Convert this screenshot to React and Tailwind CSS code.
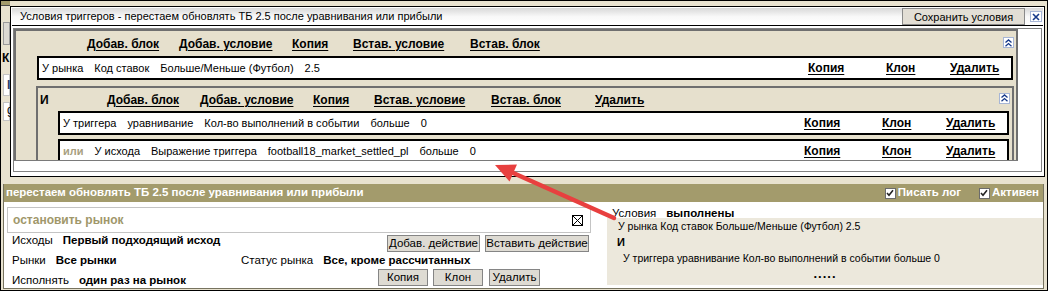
import React from 'react';

const L = ({ children }) => (
  <span className="font-bold underline decoration-1 underline-offset-2">{children}</span>
);

function Collapse() {
  return (
    <span className="flex h-[11px] w-[11px] items-center justify-center border border-[#a7b6d6] bg-white">
      <svg width="7" height="8" viewBox="0 0 7 8">
        <path d="M0.5 3.6 3.5 0.9 6.5 3.6M0.5 7.3 3.5 4.6 6.5 7.3" fill="none" stroke="#173a8a" strokeWidth="1.3" />
      </svg>
    </span>
  );
}

function CondRow({ className, children }) {
  return (
    <div className={`flex h-[24px] items-center border-2 border-black bg-white pl-[3px] ${className}`}>
      <div className="flex flex-1 items-center gap-[11px] text-[11px]">{children}</div>
      <div className="flex items-center text-[12px]">
        <span className="w-[78px]"><L>Копия</L></span>
        <span className="w-[64px]"><L>Клон</L></span>
        <span className="w-[61px]"><L>Удалить</L></span>
      </div>
    </div>
  );
}

function Btn({ className, children }) {
  return (
    <button className={`h-[17px] whitespace-nowrap border border-[#858585] bg-[#dedbd3] px-0 text-center text-[11.5px] leading-[15px] ${className}`}>
      {children}
    </button>
  );
}

function Check() {
  return (
    <span className="flex h-[11px] w-[11px] items-center justify-center border border-[#6b6b6b] bg-white">
      <svg width="8" height="8" viewBox="0 0 8 8">
        <path d="M1 4 3 6.2 7 1.2" fill="none" stroke="#222" strokeWidth="1.6" />
      </svg>
    </span>
  );
}

function LeftStrip() {
  return (
    <div className="flex w-[9px] flex-col overflow-hidden">
      <div className="h-[5px] border-b border-[#4a4a4a] bg-[#a39b6c]" />
      <div className="ml-[2px] mt-[16px] h-[23px] border border-[#9a9a9a] bg-[#dcd9d2]" />
      <div className="mt-[5px] pl-[1px] text-[12px] font-bold leading-[16px]">К</div>
      <div className="ml-[2px] mt-[8px] h-[22px] border border-[#c4c4c4] bg-white pl-[3px] text-[12px] font-bold leading-[20px] text-[#2b3c6b]">I</div>
      <div className="ml-[2px] mt-[6px] h-[19px] border border-[#c4c4c4] bg-white pl-[3px] text-[12px] leading-[14px]">g</div>
    </div>
  );
}

function Dialog() {
  return (
    <div className="mt-[5px] flex h-[171px] w-[1035px] flex-col border border-black bg-white p-[1px]">
      <div className="flex h-[18px] items-center border-b border-black bg-linear-to-b from-[#d8d8d8] via-[#f8f8f8] to-white pl-[8px] text-[11px]">
        <span>Условия триггеров - перестаем обновлять ТБ 2.5 после уравнивания или прибыли</span>
        <button className="ml-auto h-[17px] w-[123px] border border-[#8a8a8a] bg-[#e2ded5] text-[11px]">Сохранить условия</button>
        <span className="ml-[5px] mr-[1px] flex h-[11px] w-[12px] items-center justify-center border border-[#a7b6d6] bg-white">
          <svg width="8" height="8" viewBox="0 0 8 8">
            <path d="M1 1 7 7M7 1 1 7" stroke="#173a8a" strokeWidth="1.6" />
          </svg>
        </span>
      </div>
      <div className="px-[1px] pt-[2px]">
        <div className="flex h-[144px] border border-[#828282]">
          <div className="h-[132px] w-[1004px] overflow-hidden border-b border-[#7a7a7a]">
            <div className="h-[160px] border-2 border-b-0 border-[#6f6f6f] bg-[#e6e0cd]">
              <div className="flex h-[25px] items-center pl-[71px] pr-[2px] text-[12px]">
                <span className="w-[92px]"><L>Добав. блок</L></span>
                <span className="w-[113px]"><L>Добав. условие</L></span>
                <span className="w-[61px]"><L>Копия</L></span>
                <span className="w-[117px]"><L>Встав. условие</L></span>
                <L>Встав. блок</L>
                <span className="mb-[2px] ml-auto"><Collapse /></span>
              </div>
              <CondRow className="ml-[21px] mr-[3px]">
                <span>У рынка</span>
                <span>Код ставок</span>
                <span>Больше/Меньше (Футбол)</span>
                <span>2.5</span>
              </CondRow>
              <div className="ml-[20px] mr-[2px] mt-[6px] h-[100px] border-2 border-b-0 border-[#6f6f6f]">
                <div className="flex h-[23px] items-center pl-[2px] pr-[2px] text-[12px]">
                  <span className="w-[67px] font-bold">И</span>
                  <span className="w-[93px]"><L>Добав. блок</L></span>
                  <span className="w-[113px]"><L>Добав. условие</L></span>
                  <span className="w-[61px]"><L>Копия</L></span>
                  <span className="w-[117px]"><L>Встав. условие</L></span>
                  <span className="w-[104px]"><L>Встав. блок</L></span>
                  <L>Удалить</L>
                  <span className="mb-[3px] ml-auto"><Collapse /></span>
                </div>
                <CondRow className="ml-[20px] mr-[3px]">
                  <span>У триггера</span>
                  <span>уравнивание</span>
                  <span>Кол-во выполнений в событии</span>
                  <span>больше</span>
                  <span>0</span>
                </CondRow>
                <CondRow className="ml-[20px] mr-[3px] mt-[4px]">
                  <span className="font-bold text-[#a89f80]">или</span>
                  <span>У исхода</span>
                  <span>Выражение триггера</span>
                  <span>football18_market_settled_pl</span>
                  <span>больше</span>
                  <span>0</span>
                </CondRow>
              </div>
            </div>
          </div>
          <div className="flex-1 bg-white" />
        </div>
      </div>
    </div>
  );
}

function Page() {
  return (
    <div className="ml-[2px] mt-[7px] flex h-[105px] w-[1041px] flex-col border-x border-b border-[#77735f]">
      <div className="flex h-[18px] shrink-0 items-center bg-[#a39b6c] pl-[2px] pr-[4px] text-[11.5px] font-bold text-white">
        <span>перестаем обновлять ТБ 2.5 после уравнивания или прибыли</span>
        <span className="ml-auto flex items-center gap-[2px]"><Check />Писать лог</span>
        <span className="ml-[18px] flex items-center gap-[2px]"><Check />Активен</span>
      </div>
      <div className="flex flex-1 overflow-hidden bg-white text-[11.5px]">
        <div className="flex w-[600px] flex-col">
          <div className="ml-[3px] mt-[5px] flex h-[26px] w-[584px] shrink-0 items-center border border-[#c4c4c4] pl-[5px] pr-[7px]">
            <span className="text-[12px] font-bold text-[#a0976a]">остановить рынок</span>
            <span className="ml-auto flex h-[11px] w-[11px] items-center justify-center border border-black">
              <svg width="9" height="9" viewBox="0 0 9 9">
                <path d="M0 0 9 9M9 0 0 9" stroke="#000" strokeWidth="1" />
              </svg>
            </span>
          </div>
          <div className="flex h-[20px] shrink-0 items-start pl-[8px] leading-[14px]">
            <div className="flex w-[375px] gap-[10px]">
              <span>Исходы</span>
              <b>Первый подходящий исход</b>
            </div>
            <div className="mt-[2px] flex gap-[5px]">
              <Btn className="w-[93px]">Добав. действие</Btn>
              <Btn className="w-[104px]">Вставить действие</Btn>
            </div>
          </div>
          <div className="flex h-[20px] shrink-0 items-start pl-[8px] leading-[14px]">
            <div className="flex w-[229px] gap-[10px]">
              <span>Рынки</span>
              <b>Все рынки</b>
            </div>
            <div className="flex gap-[10px]">
              <span>Статус рынка</span>
              <b>Все, кроме рассчитанных</b>
            </div>
          </div>
          <div className="flex h-[20px] shrink-0 items-start pl-[8px] leading-[14px]">
            <div className="flex w-[366px] gap-[10px]">
              <span>Исполнять</span>
              <b>один раз на рынок</b>
            </div>
            <div className="-mt-[4px] flex">
              <Btn className="w-[50px]">Копия</Btn>
              <Btn className="ml-[5px] w-[50px]">Клон</Btn>
              <Btn className="ml-[6px] w-[51px]">Удалить</Btn>
            </div>
          </div>
        </div>
        <div className="flex flex-1 flex-col pt-[4px]">
          <div className="flex h-[12px] gap-[10px] pl-[8px] leading-[14px]">
            <span>Условия</span>
            <b>выполнены</b>
          </div>
          <div className="ml-[3px] h-[67px] bg-[#ece8dc] pl-[11px] text-[10.5px] leading-[16px]">
            <div>У рынка Код ставок Больше/Меньше (Футбол) 2.5</div>
            <div className="-ml-[1px] text-[11px] font-bold">И</div>
            <div className="ml-[5px]">У триггера уравнивание Кол-во выполнений в событии больше 0</div>
            <div className="pr-[11px] text-center text-[13px] font-bold tracking-[1px]">.....</div>
          </div>
        </div>
      </div>
    </div>
  );
}

function Arrow() {
  return (
    <svg className="pointer-events-none absolute left-[-1px] top-[-1px]" width="1048" height="291" viewBox="0 0 1048 291">
      <line x1="614" y1="218" x2="511" y2="172" stroke="#e8403f" strokeWidth="4.5" strokeLinecap="round" />
      <polygon points="495,165 517,164.5 509.5,181.5" fill="#e8403f" />
    </svg>
  );
}

export default function App() {
  return (
    <div className="relative h-[291px] w-[1048px] overflow-hidden border border-black bg-[#e8e2cf] font-['Liberation_Sans',Arial,sans-serif] text-black">
      <div className="flex h-[176px]">
        <LeftStrip />
        <Dialog />
      </div>
      <Page />
      <Arrow />
    </div>
  );
}
